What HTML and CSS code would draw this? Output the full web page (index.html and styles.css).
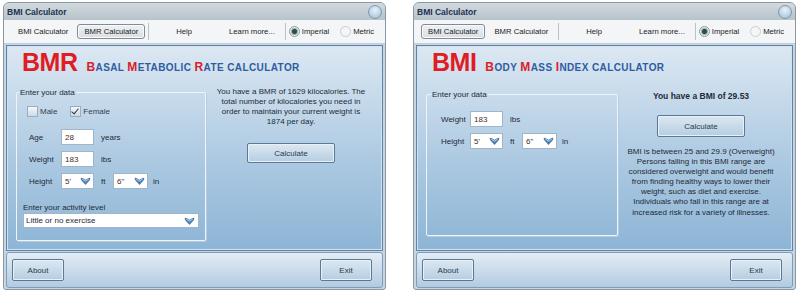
FILE: index.html
```html
<!DOCTYPE html>
<html lang="en">
<head>
    <meta charset="UTF-8">
    <title>BMI Calculator</title>
    <link rel="stylesheet" href="styles.css">
</head>
<body>
    <div class="desktop">

        <!-- BMR window -->
        <div class="window">
            <div class="titlebar">
                <span class="title">BMI Calculator</span>
                <span class="close"></span>
            </div>
            <div class="menubar">
                <span class="menu-item">BMI Calculator</span>
                <span class="menu-item active">BMR Calculator</span>
                <span class="menu-sep"></span>
                <span class="menu-item help">Help</span>
                <span class="menu-item learn">Learn more...</span>
                <span class="menu-sep"></span>
                <span class="radio checked"><i></i>Imperial</span>
                <span class="radio"><i></i>Metric</span>
            </div>
            <div class="panel">
                <div class="heading">
                    <span class="big">BMR</span>
                    <span class="sub"><b>B</b>ASAL <b>M</b>ETABOLIC <b>R</b>ATE CALCULATOR</span>
                </div>
                <div class="content">
                    <fieldset class="data bmr-data">
                        <legend>Enter your data</legend>
                        <div class="gender">
                            <span class="check"><i></i>Male</span>
                            <span class="check checked"><i></i>Female</span>
                        </div>
                        <div class="row">
                            <span class="label">Age</span>
                            <span class="input">28</span>
                            <span class="unit">years</span>
                        </div>
                        <div class="row">
                            <span class="label">Weight</span>
                            <span class="input">183</span>
                            <span class="unit">lbs</span>
                        </div>
                        <div class="row">
                            <span class="label">Height</span>
                            <span class="input combo">5'<svg class="arrow" viewBox="0 0 12 9"><path d="M0.5 1.5 Q1 0.5 2.5 1 L6 3 L9.5 1 Q11 0.5 11.5 1.5 L11 3.5 L6.5 8.5 Q6 9 5.5 8.5 L1 3.5 Z" fill="#4c7cab"/><path d="M2 1.8 L6 4 L10 1.8 L9.6 3.2 L6 5.4 L2.4 3.2 Z" fill="#a9c8e4"/></svg></span>
                            <span class="unit">ft</span>
                            <span class="input combo">6"<svg class="arrow" viewBox="0 0 12 9"><path d="M0.5 1.5 Q1 0.5 2.5 1 L6 3 L9.5 1 Q11 0.5 11.5 1.5 L11 3.5 L6.5 8.5 Q6 9 5.5 8.5 L1 3.5 Z" fill="#4c7cab"/><path d="M2 1.8 L6 4 L10 1.8 L9.6 3.2 L6 5.4 L2.4 3.2 Z" fill="#a9c8e4"/></svg></span>
                            <span class="unit last">in</span>
                        </div>
                        <div class="activity-label">Enter your activity level</div>
                        <div class="select">Little or no exercise<svg class="arrow" viewBox="0 0 12 9"><path d="M0.5 1.5 Q1 0.5 2.5 1 L6 3 L9.5 1 Q11 0.5 11.5 1.5 L11 3.5 L6.5 8.5 Q6 9 5.5 8.5 L1 3.5 Z" fill="#4c7cab"/><path d="M2 1.8 L6 4 L10 1.8 L9.6 3.2 L6 5.4 L2.4 3.2 Z" fill="#a9c8e4"/></svg></div>
                    </fieldset>
                    <div class="result bmr-result">
                        <p>You have a BMR of 1629 kilocalories. The<br>total number of kilocalories you need in<br>order to maintain your current weight is<br>1874 per day.</p>
                        <button class="btn calc">Calculate</button>
                    </div>
                </div>
            </div>
            <div class="footer">
                <button class="btn">About</button>
                <button class="btn">Exit</button>
            </div>
        </div>

        <!-- BMI window -->
        <div class="window">
            <div class="titlebar">
                <span class="title">BMI Calculator</span>
                <span class="close"></span>
            </div>
            <div class="menubar">
                <span class="menu-item active">BMI Calculator</span>
                <span class="menu-item">BMR Calculator</span>
                <span class="menu-sep"></span>
                <span class="menu-item help">Help</span>
                <span class="menu-item learn">Learn more...</span>
                <span class="menu-sep"></span>
                <span class="radio checked"><i></i>Imperial</span>
                <span class="radio"><i></i>Metric</span>
            </div>
            <div class="panel">
                <div class="heading">
                    <span class="big">BMI</span>
                    <span class="sub"><b>B</b>ODY <b>M</b>ASS <b>I</b>NDEX CALCULATOR</span>
                </div>
                <div class="content">
                    <fieldset class="data bmi-data">
                        <legend>Enter your data</legend>
                        <div class="row">
                            <span class="label">Weight</span>
                            <span class="input">183</span>
                            <span class="unit">lbs</span>
                        </div>
                        <div class="row">
                            <span class="label">Height</span>
                            <span class="input combo">5'<svg class="arrow" viewBox="0 0 12 9"><path d="M0.5 1.5 Q1 0.5 2.5 1 L6 3 L9.5 1 Q11 0.5 11.5 1.5 L11 3.5 L6.5 8.5 Q6 9 5.5 8.5 L1 3.5 Z" fill="#4c7cab"/><path d="M2 1.8 L6 4 L10 1.8 L9.6 3.2 L6 5.4 L2.4 3.2 Z" fill="#a9c8e4"/></svg></span>
                            <span class="unit">ft</span>
                            <span class="input combo">6"<svg class="arrow" viewBox="0 0 12 9"><path d="M0.5 1.5 Q1 0.5 2.5 1 L6 3 L9.5 1 Q11 0.5 11.5 1.5 L11 3.5 L6.5 8.5 Q6 9 5.5 8.5 L1 3.5 Z" fill="#4c7cab"/><path d="M2 1.8 L6 4 L10 1.8 L9.6 3.2 L6 5.4 L2.4 3.2 Z" fill="#a9c8e4"/></svg></span>
                            <span class="unit last">in</span>
                        </div>
                    </fieldset>
                    <div class="result bmi-result">
                        <p class="score">You have a BMI of 29.53</p>
                        <button class="btn calc">Calculate</button>
                        <p>BMI is between 25 and 29.9 (Overweight)<br>Persons falling in this BMI range are<br>considered overweight and would benefit<br>from finding healthy ways to lower their<br>weight, such as diet and exercise.<br>Individuals who fall in this range are at<br>increased risk for a variety of illnesses.</p>
                    </div>
                </div>
            </div>
            <div class="footer">
                <button class="btn">About</button>
                <button class="btn">Exit</button>
            </div>
        </div>

    </div>
</body>
</html>
```

FILE: styles.css
```css
body {
    margin: 0;
    background: #fff;
    font-family: "Liberation Sans", Arial, sans-serif;
    font-size: 8px;
    color: #1e2a36;
}

.desktop {
    display: flex;
    gap: 27px;
    padding: 2px 0 0 3px;
}

.window {
    width: 383px;
    height: 288px;
    box-sizing: border-box;
    display: flex;
    flex-direction: column;
    border: 1px solid #8b98a4;
    border-radius: 6px 6px 3px 3px;
    background: #c7d5e1;
    overflow: hidden;
}

.titlebar {
    height: 17px;
    display: flex;
    align-items: center;
    justify-content: space-between;
    padding: 0 3px 0 3px;
    background: linear-gradient(#d2dadf, #b6c3ca);
}

.title {
    font-size: 8.5px;
    font-weight: bold;
    color: #1d3150;
}

.close {
    width: 12px;
    height: 12px;
    border-radius: 50%;
    border: 1px solid #7d97ae;
    background: radial-gradient(circle at 50% 35%, #e9f3fb, #9dbad2);
}

.menubar {
    height: 23px;
    display: flex;
    align-items: center;
    padding: 0 0 0 7px;
    background: #f3f5f7;
    border-bottom: 1px solid #c3ced8;
    white-space: nowrap;
    font-size: 7.7px;
}

.menu-item {
    padding: 2px 6px;
    border: 1px solid transparent;
    border-radius: 3px;
    color: #1b1b1b;
}

.menu-item + .menu-item {
    margin-left: 2px;
}

.menu-item.active {
    border-color: #7f8b96;
    background: linear-gradient(#eef1f3, #d9dfe4);
    box-shadow: inset 0 0 0 1px #fafbfc;
}

.menu-sep {
    width: 1px;
    height: 17px;
    margin-left: 3px;
    background: #b8c2cb;
}

.menu-item.help {
    margin-left: 20px;
}

.menu-item.learn {
    margin-left: 23px;
}

.radio {
    display: flex;
    align-items: center;
    gap: 2px;
    margin-left: 3px;
    margin-right: 8px;
    color: #1b1b1b;
}

.radio i {
    width: 9px;
    height: 9px;
    border-radius: 50%;
    border: 1px solid #c9ced3;
    background: #f4f5f6;
}

.radio.checked i {
    border-color: #8f9aa3;
    background: radial-gradient(circle, #2e4b45 0 2px, #8fb0a6 3px, #e6ecef 4px);
}

.panel {
    flex: 1;
    margin: 1px 2px 0;
    border: 1px solid #5e84a9;
    box-shadow: inset 0 0 0 1px #d2e1ee;
    background: linear-gradient(#dce8f3, #a9c7e0 60%, #8db5d6);
    display: flex;
    flex-direction: column;
}

.heading {
    display: flex;
    align-items: baseline;
    padding: 2px 0 0 15px;
    height: 32px;
    box-sizing: border-box;
}

.big {
    font-size: 25px;
    font-weight: bold;
    color: #e01c24;
    letter-spacing: -0.5px;
}

.sub {
    margin-left: 9px;
    font-size: 10px;
    font-weight: bold;
    color: #2f5d9e;
    letter-spacing: 0.4px;
}

.sub b {
    font-size: 12px;
    color: #d8222a;
}

.content {
    display: flex;
    padding: 10px 0 0 8px;
}

.data {
    margin: 0;
    padding: 0 0 0 12px;
    border: 1px solid #eef4fa;
    border-radius: 2px;
    box-shadow: 1px 1px 0 #b4cbe0;
}

.data legend {
    padding: 0 1px;
    margin-left: -10px;
    color: #1e2a36;
}

.bmr-data {
    width: 190px;
    height: 153px;
    box-sizing: border-box;
    margin-left: 1px;
}

.bmi-data {
    width: 192px;
    height: 146px;
    box-sizing: border-box;
    margin-top: 2px;
    margin-left: 1px;
    padding-left: 14px;
}

.gender {
    display: flex;
    gap: 13px;
    margin: 9px 0 12px -2px;
}

.check {
    display: flex;
    align-items: center;
    gap: 2px;
    color: #34414d;
}

.check i {
    width: 9px;
    height: 9px;
    border: 1px solid #97adc1;
    background: linear-gradient(#f3f7fa, #cfdbe5);
    position: relative;
}

.check.checked i::after {
    content: "";
    position: absolute;
    left: 2px;
    top: 0;
    width: 3px;
    height: 6px;
    border: solid #2b3540;
    border-width: 0 1.5px 1.5px 0;
    transform: rotate(40deg);
}

.row {
    display: flex;
    align-items: center;
    height: 16px;
    margin-bottom: 6px;
}

.bmi-data .row:first-of-type {
    margin-top: 12px;
}

.label {
    width: 32px;
    color: #1e2a36;
}

.bmi-data .label {
    width: 29px;
}

.input {
    width: 33px;
    height: 16px;
    box-sizing: border-box;
    display: flex;
    align-items: center;
    justify-content: space-between;
    padding: 0 3px;
    background: #fff;
    border: 1px solid #9fb5c9;
    color: #4a2c1c;
}

.combo {
    padding-right: 2px;
}

.combo + .unit + .combo {
    width: 35px;
}

.arrow {
    width: 11px;
    height: 8px;
}

.unit {
    margin-left: 7px;
    width: 12px;
    color: #1e2a36;
}

.unit.last {
    margin-left: 5px;
}

.activity-label {
    margin-top: 14px;
    margin-left: -6px;
}

.select {
    display: flex;
    align-items: center;
    justify-content: space-between;
    width: 176px;
    height: 15px;
    box-sizing: border-box;
    margin: 1px 0 0 -6px;
    padding: 0 3px 0 2px;
    background: #fff;
    border: 1px solid #9fb5c9;
    color: #1e2a36;
}

.result {
    flex: 1;
    display: flex;
    flex-direction: column;
    align-items: center;
    text-align: center;
    padding-right: 6px;
}

.bmi-result {
    padding-right: 8px;
}

.result p {
    margin: 0;
    line-height: 10px;
}

.bmr-result p {
    margin-top: -1px;
}

.bmr-result .calc {
    margin-top: 16px;
}

.bmi-result .score {
    margin-top: 3px;
    font-weight: bold;
    font-size: 8.5px;
}

.bmi-result .btn.calc {
    margin-top: 14px;
    height: 22px;
}

.bmi-result p:last-child {
    margin-top: 10px;
    line-height: 10.1px;
}

.btn {
    font-family: "Liberation Sans", Arial, sans-serif;
    font-size: 8px;
    color: #2a3b4c;
    width: 52px;
    height: 22px;
    border: 1px solid #5b7896;
    border-radius: 2px;
    background: linear-gradient(#dce8f2, #b5cde1);
    box-shadow: inset 0 0 0 1px #e9f1f8;
    padding: 0;
}

.btn.calc {
    width: 88px;
    height: 20px;
}

.footer {
    height: 36px;
    margin: 1px 2px 1px;
    box-sizing: border-box;
    display: flex;
    align-items: center;
    justify-content: space-between;
    padding: 0 10px 0 5px;
    border: 1px solid #7c9dbc;
    border-radius: 3px;
    background: linear-gradient(#e4edf5, #c6d8e8 60%, #b3cbe0);
}
```
